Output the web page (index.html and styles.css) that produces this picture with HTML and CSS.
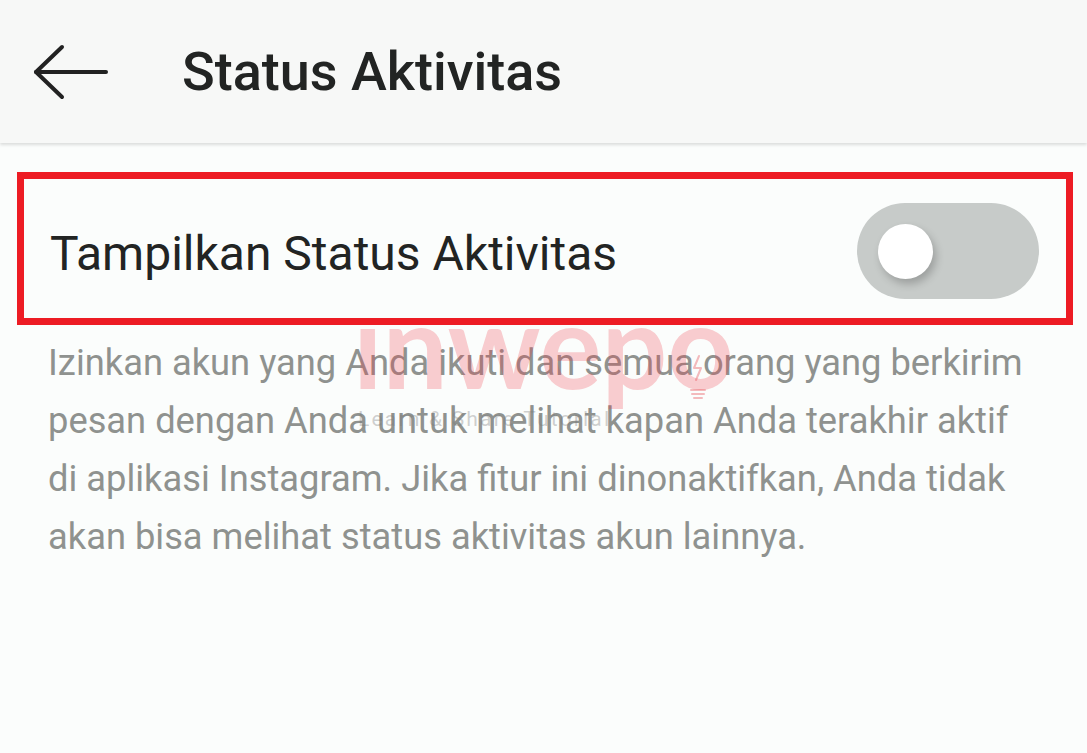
FILE: index.html
```html
<!DOCTYPE html>
<html lang="id">
<head>
<meta charset="utf-8">
<title>Status Aktivitas</title>
<link rel="stylesheet" href="styles.css">
</head>
<body>
<header class="appbar">
  <button class="back" aria-label="Kembali">
    <svg width="76" height="56" viewBox="0 0 76 56" fill="none" stroke="#222" stroke-width="4" stroke-linecap="round" stroke-linejoin="round">
      <path d="M3 28 H73"/>
      <path d="M29 3 L3 28 L29 53"/>
    </svg>
  </button>
  <h1 class="title">Status Aktivitas</h1>
</header>
<main class="content">
  <div class="setting">
    <span class="setting-label">Tampilkan Status Aktivitas</span>
    <span class="switch" role="switch" aria-checked="false"><span class="thumb"></span></span>
  </div>
  <p class="desc">Izinkan akun yang Anda ikuti dan semua orang yang berkirim pesan dengan Anda untuk melihat kapan Anda terakhir aktif di aplikasi Instagram. Jika fitur ini dinonaktifkan, Anda tidak akan bisa melihat status aktivitas akun lainnya.</p>
  <div class="watermark" aria-hidden="true">
    <span class="wm-logo">inwepo</span>
    <span class="wm-tag">Learn &amp; Share Tutorial</span>
    <svg class="wm-bulb" width="20" height="50" viewBox="0 0 20 50" fill="none" stroke="rgba(230,60,70,0.35)" stroke-width="2" stroke-linecap="round" stroke-linejoin="round">
      <path d="M11 4 L6 16 L13 16 L8 28"/>
      <path d="M3 38 H17"/>
      <path d="M4 42 H16"/>
      <path d="M6 46 H14"/>
    </svg>
  </div>
</main>
</body>
</html>
```
FILE: styles.css
```css
html, body {
  margin: 0;
  padding: 0;
}
body {
  background: #fbfdfc;
  font-family: Roboto, "Noto Sans", "Liberation Sans", sans-serif;
  width: 1087px;
  height: 753px;
  overflow: hidden;
}
.appbar {
  height: 143px;
  background: #f7f8f7;
  box-shadow: 0 2px 3px rgba(0, 0, 0, 0.13);
  display: flex;
  align-items: center;
  position: relative;
  z-index: 3;
}
.back {
  border: 0;
  background: none;
  padding: 0;
  margin-left: 33px;
  width: 76px;
  height: 56px;
  display: flex;
}
.title {
  margin: 0 0 0 73px;
  font-size: 54px;
  font-weight: 500;
  color: #222423;
  letter-spacing: 0;
}
.content {
  position: relative;
  padding: 29px 14px 0 17px;
}
.setting {
  position: relative;
  z-index: 2;
  background: #fbfdfc;
  height: 139px;
  border: 7px solid #ed1c24;
  display: flex;
  align-items: center;
  justify-content: space-between;
  padding: 0 27px 0 26px;
}
.setting-label {
  font-size: 48px;
  color: #222423;
  padding-top: 10px;
}
.switch {
  width: 182px;
  height: 96px;
  border-radius: 48px;
  background: #c7cbc9;
  display: flex;
  align-items: center;
  padding-left: 21px;
  box-sizing: border-box;
  margin-top: 5px;
}
.thumb {
  width: 55px;
  height: 55px;
  border-radius: 50%;
  background: #fff;
  box-shadow: 3px 5px 8px rgba(0, 0, 0, 0.22);
}
.desc {
  margin: 9px 0 0 31px;
  width: 990px;
  font-size: 36.3px;
  line-height: 58px;
  color: #8f928f;
}
.watermark {
  position: absolute;
  left: 353px;
  top: 152px;
  display: flex;
  flex-direction: column;
  pointer-events: none;
  z-index: 1;
}
.wm-logo {
  font-family: Lato, "Open Sans", sans-serif;
  font-weight: 700;
  font-size: 116px;
  line-height: 100px;
  color: rgba(240, 60, 70, 0.25);
  letter-spacing: 0;
}
.wm-tag {
  margin: 12px 0 0 5px;
  font-family: Roboto, sans-serif;
  font-size: 21px;
  color: rgba(120, 120, 120, 0.35);
  letter-spacing: 2.2px;
}
.wm-bulb {
  position: absolute;
  left: 335px;
  top: 57px;
}
```
